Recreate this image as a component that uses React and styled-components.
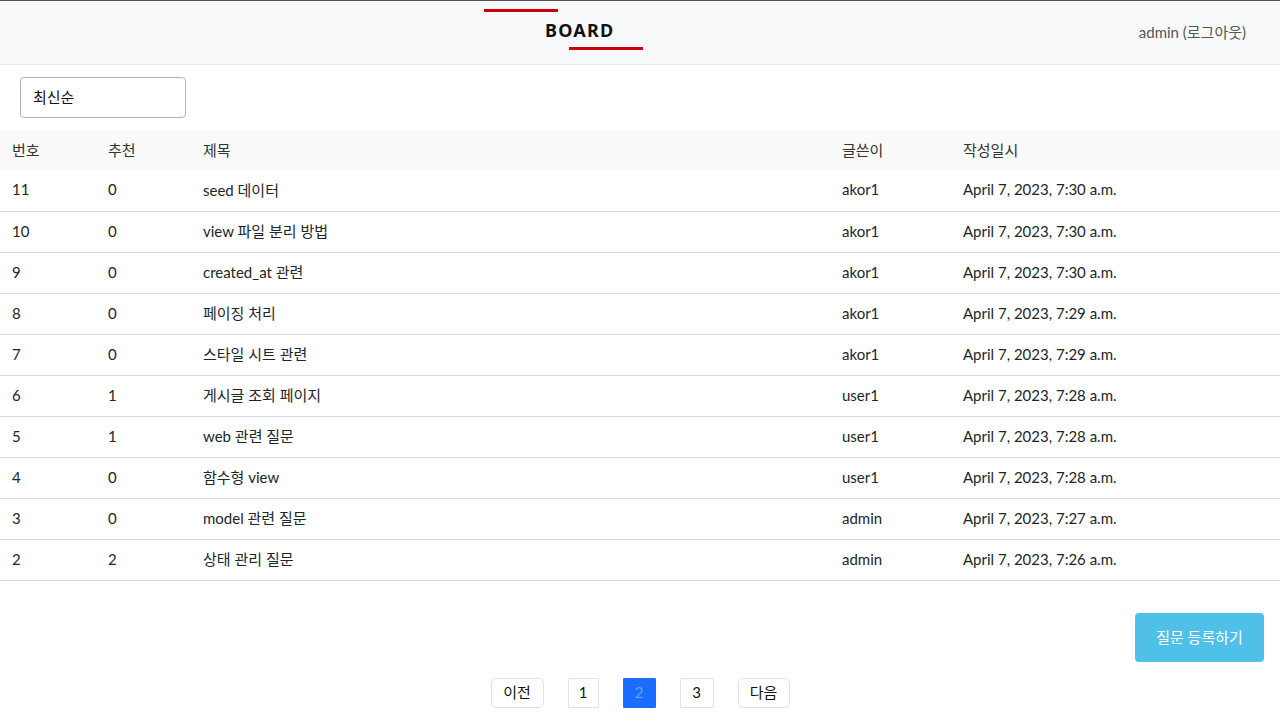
import React from "react";
import styled, { createGlobalStyle } from "styled-components";

const Global = createGlobalStyle`
  html, body { margin: 0; padding: 0; background: #fff; }
  body {
    font-family: Lato, "Noto Sans CJK KR", sans-serif;
    font-size: 15px;
    color: #212529;
  }
  * { box-sizing: border-box; }
`;

const Header = styled.header`
  display: grid;
  grid-template-columns: 484px 160px 1fr;
  align-items: stretch;
  height: 65px;
  background: #f8f9fa;
  border-top: 1px solid #555;
  border-bottom: 1px solid #e3e6ea;
`;

const Logo = styled.div`
  display: flex;
  flex-direction: column;
  padding-top: 8px;
`;

const RedBar = styled.div`
  width: 74px;
  height: 3px;
  background: #cc0000;
  align-self: ${(p) => (p.$right ? "flex-end" : "flex-start")};
  margin-right: ${(p) => (p.$right ? "1px" : "0")};
`;

const LogoText = styled.div`
  padding-left: 61px;
  height: 35px;
  line-height: 37px;
  font-family: "Noto Sans", sans-serif;
  font-size: 18px;
  font-weight: 700;
  letter-spacing: 1.2px;
  color: #111;
`;

const UserArea = styled.div`
  display: flex;
  justify-content: flex-end;
  align-items: center;
  padding-right: 34px;
  padding-bottom: 2px;
  font-size: 15px;
  color: #555;
`;

const Main = styled.main`
  padding-top: 12px;
`;

const SortSelect = styled.select`
  appearance: none;
  -webkit-appearance: none;
  margin-left: 20px;
  width: 166px;
  height: 41px;
  padding: 0 12px 2px;
  border: 1px solid #b5b5b5;
  border-radius: 4px;
  background: #fff;
  font-family: inherit;
  font-size: 15px;
  color: #111;
  display: block;
`;

const Table = styled.table`
  width: 100%;
  margin-top: 12px;
  border-collapse: collapse;
  table-layout: fixed;
`;

const HeadRow = styled.tr`
  background: #fafafa;
  height: 40px;
`;

const Th = styled.th`
  text-align: left;
  font-weight: 400;
  font-size: 15px;
  color: #333;
  padding: 0 0 2px 12px;
  width: ${(p) => p.$w || "auto"};
`;

const Row = styled.tr`
  height: 41px;
  border-bottom: 1px solid #d6dbe0;
`;

const Td = styled.td`
  padding: 0 0 2px 12px;
  font-size: 15px;
  color: #212529;
  white-space: nowrap;
`;

const Actions = styled.div`
  display: flex;
  justify-content: flex-end;
  padding: 32px 16px 0 0;
`;

const WriteButton = styled.button`
  width: 129px;
  height: 49px;
  border: none;
  border-radius: 4px;
  background: #4fc1e9;
  color: #fff;
  font-family: inherit;
  font-size: 15px;
  padding: 0 0 2px;
`;

const Pager = styled.nav`
  display: flex;
  justify-content: center;
  gap: 24px;
  padding-top: 16px;
`;

const PageBtn = styled.button`
  height: 30px;
  min-width: ${(p) => p.$w}px;
  padding: 0 0 2px;
  border: 1px solid ${(p) => (p.$active ? "#1a6dff" : "#dfe3e8")};
  border-radius: ${(p) => (p.$round ? "5px" : "1px")};
  background: ${(p) => (p.$active ? "#1a6dff" : "#fff")};
  color: ${(p) => (p.$active ? "#5aa7ff" : "#111")};
  font-family: inherit;
  font-size: 15px;
`;

const rows = [
  [11, 0, "seed 데이터", "akor1", "April 7, 2023, 7:30 a.m."],
  [10, 0, "view 파일 분리 방법", "akor1", "April 7, 2023, 7:30 a.m."],
  [9, 0, "created_at 관련", "akor1", "April 7, 2023, 7:30 a.m."],
  [8, 0, "페이징 처리", "akor1", "April 7, 2023, 7:29 a.m."],
  [7, 0, "스타일 시트 관련", "akor1", "April 7, 2023, 7:29 a.m."],
  [6, 1, "게시글 조회 페이지", "user1", "April 7, 2023, 7:28 a.m."],
  [5, 1, "web 관련 질문", "user1", "April 7, 2023, 7:28 a.m."],
  [4, 0, "함수형 view", "user1", "April 7, 2023, 7:28 a.m."],
  [3, 0, "model 관련 질문", "admin", "April 7, 2023, 7:27 a.m."],
  [2, 2, "상태 관리 질문", "admin", "April 7, 2023, 7:26 a.m."],
];

export default function App() {
  return (
    <>
      <Global />
      <Header>
        <div />
        <Logo>
          <RedBar />
          <LogoText>BOARD</LogoText>
          <RedBar $right />
        </Logo>
        <UserArea>admin (로그아웃)</UserArea>
      </Header>
      <Main>
        <SortSelect defaultValue="recent">
          <option value="recent">최신순</option>
          <option value="recommend">추천순</option>
        </SortSelect>
        <Table>
          <thead>
            <HeadRow>
              <Th $w="96px">번호</Th>
              <Th $w="95px">추천</Th>
              <Th $w="639px">제목</Th>
              <Th $w="121px">글쓴이</Th>
              <Th>작성일시</Th>
            </HeadRow>
          </thead>
          <tbody>
            {rows.map((r) => (
              <Row key={r[0]}>
                {r.map((c, i) => (
                  <Td key={i}>{c}</Td>
                ))}
              </Row>
            ))}
          </tbody>
        </Table>
        <Actions>
          <WriteButton>질문 등록하기</WriteButton>
        </Actions>
        <Pager>
          <PageBtn $w={53} $round>이전</PageBtn>
          <PageBtn $w={31}>1</PageBtn>
          <PageBtn $w={33} $active>2</PageBtn>
          <PageBtn $w={34}>3</PageBtn>
          <PageBtn $w={52} $round>다음</PageBtn>
        </Pager>
      </Main>
    </>
  );
}
